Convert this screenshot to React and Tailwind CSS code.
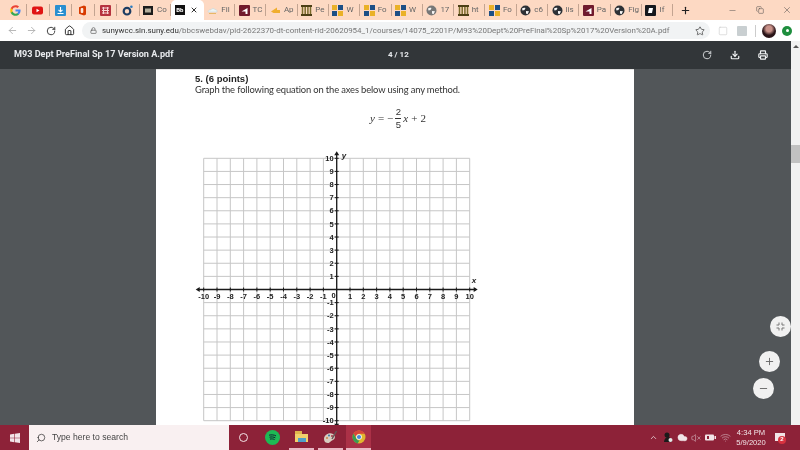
import React from "react";
import { ArrowLeft, ArrowRight, RotateCw, Home, Lock, Star, Download, Printer, Plus, Minus, Search, ChevronUp, Cloud, Wifi, VolumeX, X, Square, Copy } from "lucide-react";

const Tile = ({ bg, children }) => (
  <svg width="11" height="11" viewBox="0 0 11 11">
    <rect width="11" height="11" rx="1" fill={bg} />
    {children}
  </svg>
);
const G = () => (
  <svg width="11" height="11" viewBox="0 0 24 24">
    <path d="M23 12.2c0-.8-.1-1.500-.2-2.200H12v4.300h6.200c-.3 1.400-1.100 2.600-2.300 3.400v2.800h3.700c2.100-2 3.400-4.900 3.400-8.300z" fill="#4285f4" />
    <path d="M12 23.500c3.100 0 5.700-1 7.600-2.800l-3.700-2.800c-1 .7-2.300 1.100-3.900 1.100-3 0-5.500-2-6.400-4.700H1.800v2.900c1.900 3.800 5.800 6.300 10.200 6.300z" fill="#34a853" />
    <path d="M5.600 14.300c-.5-1.500-.5-3.100 0-4.600V6.800H1.800c-1.600 3.200-1.600 7 0 10.400z" fill="#fbbc05" />
    <path d="M12 5c1.700 0 3.200.6 4.400 1.700l3.300-3.300C17.700 1.600 15.100.5 12 .5 7.600.5 3.700 3 1.800 6.800l3.800 2.900C6.500 7 9 5 12 5z" fill="#ea4335" />
  </svg>
);
const Yt = () => (
  <svg width="11" height="11" viewBox="0 0 11 11"><rect y="1.500" width="11" height="8" rx="2" fill="#e01414" /><path d="M4.500 3.700v3.600l3-1.800z" fill="#fff" /></svg>
);
const Dl = () => (
  <Tile bg="#2a8fd0"><path d="M5.500 2v4.500M3.500 4.800l2 2 2-2M2.500 8.500h6" stroke="#fff" strokeWidth="1.100" fill="none" /></Tile>
);
const Office = () => (
  <svg width="11" height="11" viewBox="0 0 11 11"><path d="M2 2.300 7 .5l2 1v8l-2 1-5-1.800z" fill="#d83b01" /><rect x="3.700" y="3" width="2.600" height="5" rx="1" fill="#fde7d9" /></svg>
);
const Red = () => (
  <Tile bg="#b5323f"><path d="M2 3h7M2 5.500h7M2 8h7M3.500 2v7M7.500 2v7" stroke="#f6d3d3" strokeWidth="1" /></Tile>
);
const Ring = () => (
  <svg width="11" height="11" viewBox="0 0 11 11"><circle cx="5" cy="6.200" r="3.300" fill="none" stroke="#1d3d63" strokeWidth="2.200" /><circle cx="9.400" cy="1.800" r="1.300" fill="#2a7bc0" /></svg>
);
const Bb = () => (
  <svg width="11" height="11" viewBox="0 0 11 11"><rect y="1" width="10" height="9" fill="#1c1c1c" /><rect x="2" y="3.500" width="6" height="4" fill="#e8e0c8" opacity="0.75" /></svg>
);
const BbActive = () => (
  <span className="flex h-[10px] w-[10px] items-center justify-center bg-[#111] text-[6px] font-bold leading-none text-white">Bb</span>
);
const CloudFav = () => (
  <svg width="11" height="11" viewBox="0 0 11 11"><path d="M1 7c0-1.500 1.500-2.500 3-2.200C4.700 3.300 7 3 8 4.500c1.500 0 2.500 1 2 2.500z" fill="#eef3f4" stroke="#b9d3d8" strokeWidth="0.500" /><path d="M2 8.500h7" stroke="#e7b766" /></svg>
);
const Maroon = () => (
  <Tile bg="#701a2d"><path d="M2.500 6.500 8.500 3v6H6.500V6.500z" fill="#fff" /></Tile>
);
const Arrow = () => (
  <svg width="11" height="11" viewBox="0 0 11 11"><path d="M1 6.500 7 2.500v2.500h3v3H3.500z" fill="#f0ae2e" /></svg>
);
const Bars = () => (
  <svg width="11" height="11" viewBox="0 0 11 11"><rect width="11" height="2" fill="#4c3f16" /><rect y="9" width="11" height="2" fill="#4c3f16" /><path d="M1.500 2v7M4.200 2v7M6.900 2v7M9.500 2v7" stroke="#7a6b2b" strokeWidth="1.500" /></svg>
);
const Squares = () => (
  <svg width="11" height="11" viewBox="0 0 11 11"><rect width="5" height="5" fill="#eab127" /><rect x="6" width="5" height="5" fill="#1d4f86" /><rect y="6" width="5" height="5" fill="#1d4f86" /><rect x="6" y="6" width="5" height="5" fill="#eab127" /></svg>
);
const Globe = ({ c = "#2d3136" }) => (
  <svg width="11" height="11" viewBox="0 0 11 11"><circle cx="5.500" cy="5.500" r="5" fill={c} /><path d="M2 3.500c1-.8 2.500-1 3.500-.5l-1 2-2 .5zM6 6l3 .3-1.500 3L6 8.500z" fill="#f7f7f7" /></svg>
);
const GlobeGray = () => <Globe c="#777" />;
const Book = () => (
  <Tile bg="#16181c"><path d="M4 3h4l-1 5H3z" fill="#fff" /></Tile>
);

const pinned = [G, Yt, Dl, Office, Red, Ring];
const tabs = [
  [Bb, "Co"], null,
  [CloudFav, "Fil"], [Maroon, "TC"], [Arrow, "Ap"], [Bars, "Pe"], [Squares, "W"], [Squares, "Fo"], [Squares, "W"],
  [GlobeGray, "17"], [Bars, "ht"], [Squares, "Fo"], [Globe, "c6"], [Globe, "lis"], [Maroon, "Pa"], [Globe, "Fig"], [Book, "If"],
];

const Tabs = () => (
  <div className="flex h-[20px] shrink-0 items-center bg-[#fdd9c3] pl-[4.500px] font-['Roboto',sans-serif] text-[8px] text-[#666]">
    {pinned.map((Icon, i) => (
      <div key={i} className="flex h-[12px] w-[22.500px] shrink-0 items-center border-r border-[#c3a491] pl-[5px]">
        <Icon />
      </div>
    ))}
    {tabs.map((t, i) => {
      if (!t) {
        return (
          <div key={i} className="flex h-full w-[33px] shrink-0 items-center rounded-t-[5px] bg-white pl-[4px]">
            <BbActive />
            <X size={8} strokeWidth={3} className="ml-[5px] text-[#333]" />
          </div>
        );
      }
      const [Icon, label] = t;
      return (
        <div key={i} className="flex h-[12px] w-[31.300px] shrink-0 items-center gap-[3px] overflow-hidden border-r border-[#c3a491] pl-[3.500px]">
          <span className="flex h-[11px] w-[11px] shrink-0"><Icon /></span>
          <span className="whitespace-nowrap">{label}</span>
        </div>
      );
    })}
    <Plus size={11} strokeWidth={2.500} className="ml-[7px] text-[#222]" />
    <div className="ml-auto flex items-center text-[#444]">
      <span className="flex w-[27px] justify-center"><Minus size={9} strokeWidth={1.200} /></span>
      <span className="flex w-[27px] justify-center"><Copy size={8} strokeWidth={1.500} /></span>
      <span className="flex w-[27px] justify-center"><X size={10} strokeWidth={1.200} /></span>
    </div>
  </div>
);

const Toolbar = () => (
  <div className="flex h-[21px] shrink-0 items-center overflow-hidden bg-white font-['Roboto',sans-serif]">
    <ArrowLeft size={11} className="ml-[7px] shrink-0 text-[#aaa]" strokeWidth={1.800} />
    <ArrowRight size={11} className="ml-[8px] shrink-0 text-[#aaa]" strokeWidth={1.800} />
    <RotateCw size={10} className="ml-[9px] shrink-0 text-[#333]" strokeWidth={2.200} />
    <Home size={11} className="ml-[8px] shrink-0 text-[#222]" strokeWidth={2} />
    <div className="ml-[7px] flex h-[17px] w-[628px] shrink-0 items-center rounded-full bg-[#f1f3f4] pl-[8px] text-[7.950px] text-[#777]">
      <Lock size={7} strokeWidth={2.500} className="shrink-0 text-[#666]" />
      <span className="ml-[5px] whitespace-nowrap"><span className="text-[#333]">sunywcc.sln.suny.edu</span>/bbcswebdav/pid-2622370-dt-content-rid-20620954_1/courses/14075_2201P/M93%20Dept%20PreFinal%20Sp%2017%20Version%20A.pdf</span>
      <Star size={10} strokeWidth={1.800} className="ml-auto mr-[5px] shrink-0 text-[#444]" />
    </div>
    <Square size={10} strokeWidth={1.500} className="ml-[8px] shrink-0 text-[#ccc]" />
    <span className="ml-[9px] h-[10px] w-[10px] shrink-0 rounded-[1px] bg-[#c9cfd1]" />
    <span className="ml-[8px] h-[12px] w-px shrink-0 bg-[#ccc]" />
    <span className="ml-[6px] h-[14px] w-[14px] shrink-0 rounded-full bg-[radial-gradient(circle_at_50%_35%,#c9928a_25%,#2a1418_55%)]" />
    <span className="ml-[6px] flex h-[10px] w-[10px] shrink-0 items-center justify-center rounded-full bg-[#1e8e3e]"><span className="h-[3px] w-[3px] rounded-full bg-white" /></span>
  </div>
);

const Header = () => (
  <div className="relative flex h-[28px] shrink-0 items-center bg-[#323639] pl-[14px] font-['Roboto',sans-serif] text-[9.100px] font-medium text-[#e8eaed]">
    <span className="whitespace-nowrap font-bold">M93 Dept PreFinal Sp 17 Version A.pdf</span>
    <span className="absolute left-[388px] text-[8px] font-bold">4 / 12</span>
    <div className="ml-auto mr-[23px] flex items-center gap-[18px]">
      <RotateCw size={10} strokeWidth={2} className="text-[#e8eaed]" />
      <Download size={10} strokeWidth={2.800} className="text-[#f1f3f4]" />
      <Printer size={10} strokeWidth={2.800} className="text-[#f1f3f4]" />
    </div>
  </div>
);

const Chart = () => {
  const cx = 141.7, cy = 141.5, sx = 13.3, sy = 13.12;
  const range = Array.from({ length: 21 }, (_, i) => i - 10);
  const font = "'Liberation Sans',sans-serif";
  return (
    <svg width="290" height="288" viewBox="0 0 290 288" className="block">
      {range.map((n) => (
        <g key={n}>
          <line x1={cx + n * sx} x2={cx + n * sx} y1={cy - 10 * sy} y2={cy + 10 * sy} stroke="#c6c6c6" strokeWidth="1" />
          <line y1={cy + n * sy} y2={cy + n * sy} x1={cx - 10 * sx} x2={cx + 10 * sx} stroke="#c6c6c6" strokeWidth="1" />
        </g>
      ))}
      <line x1={cx} x2={cx} y1={cy - 10 * sy - 4} y2={cy + 10 * sy + 4} stroke="#1a1a1a" strokeWidth="1.300" />
      <line x1={cx - 10 * sx - 6} x2={cx + 10 * sx + 6} y1={cy} y2={cy} stroke="#1a1a1a" strokeWidth="1.300" />
      <path d={`M${cx} ${cy - 10 * sy - 7}l-2.500 4h5z`} fill="#1a1a1a" />
      <path d={`M${cx} ${cy + 10 * sy + 7}l-2.500 -4h5z`} fill="#1a1a1a" />
      <path d={`M${cx + 10 * sx + 8} ${cy}l-4 -2.500v5z`} fill="#1a1a1a" />
      <path d={`M${cx - 10 * sx - 8} ${cy}l4 -2.500v5z`} fill="#1a1a1a" />
      {range.filter((n) => n !== 0).map((n) => (
        <g key={n} fill="#222" fontFamily={font} fontSize="7.500" fontWeight="700">
          <line x1={cx + n * sx} x2={cx + n * sx} y1={cy - 2} y2={cy + 2} stroke="#1a1a1a" strokeWidth="1" />
          <line y1={cy + n * sy} y2={cy + n * sy} x1={cx - 2} x2={cx + 2} stroke="#1a1a1a" strokeWidth="1" />
          <text x={cx + n * sx} y={cy + 9} textAnchor="middle">{n}</text>
          <text x={cx - 3} y={cy - n * sy + 2.700} textAnchor="end">{n}</text>
        </g>
      ))}
      <text x={cx - 3} y={cy + 8.500} textAnchor="middle" fill="#222" fontFamily={font} fontSize="7.500" fontWeight="700">0</text>
      <text x={cx + 5} y={cy - 10 * sy} fill="#222" fontFamily={font} fontSize="8" fontStyle="italic" fontWeight="700">y</text>
      <text x={cx + 135} y={cy - 6.500} fill="#222" fontFamily={font} fontSize="8" fontStyle="italic" fontWeight="700">x</text>
    </svg>
  );
};

const Page = () => (
  <div className="ml-[156px] flex h-[356px] w-[478px] shrink-0 flex-col overflow-hidden border-t border-[#e4e4e4] bg-white pl-[39px] text-[#222]">
    <div className="mt-[3px] shrink-0 font-['Liberation_Sans',sans-serif] text-[9.500px] font-bold leading-[12px] text-[#222]">5. (6 points)</div>
    <div className="mt-[-1px] shrink-0 whitespace-nowrap font-['Lato',sans-serif] text-[9.400px] leading-[12px] tracking-[-0.015em] text-[#333]">Graph the following equation on the axes below using any method.</div>
    <div className="ml-[175px] mt-[8px] flex h-[28px] shrink-0 items-center whitespace-nowrap font-['Liberation_Serif',serif] text-[11px] text-[#333]">
      <span className="italic">y</span>
      <span className="mx-[3px]">=</span>
      <span>−</span>
      <span className="flex flex-col items-center px-[2px] text-[9.500px] leading-[12px]">
        <span className="font-['Liberation_Sans',sans-serif]">2</span>
        <span className="h-px w-[6px] bg-[#333]" />
        <span className="font-['Liberation_Sans',sans-serif]">5</span>
      </span>
      <span className="italic">x</span>
      <span className="mx-[3px]">+</span>
      <span>2</span>
    </div>
    <div className="mt-[16px] shrink-0"><Chart /></div>
  </div>
);

const FloatBtn = ({ className, children }) => (
  <div className={`absolute z-10 flex h-[21px] w-[21px] items-center justify-center rounded-full bg-[#f1f1f1] ${className}`}>{children}</div>
);

const Viewer = () => (
  <div className="relative flex min-w-0 flex-1 flex-col">
    <Header />
    <div className="flex-1 bg-[#525659]"><Page /></div>
    <FloatBtn className="left-[769.500px] top-[274.500px]">
      <svg width="9" height="9" viewBox="0 0 9 9" fill="none" stroke="#777" strokeWidth="1"><path d="M3 0.500V3H0.500M6 0.500V3H8.500M3 8.500V6H0.500M6 8.500V6H8.500" /></svg>
    </FloatBtn>
    <FloatBtn className="left-[758.500px] top-[309.500px]"><Plus size={11} strokeWidth={2} className="text-[#666]" /></FloatBtn>
    <FloatBtn className="left-[752.500px] top-[336.500px]"><Minus size={11} strokeWidth={2} className="text-[#666]" /></FloatBtn>
  </div>
);

const Scrollbar = () => (
  <div className="flex w-[9px] shrink-0 flex-col items-center bg-[#f1f1f1]">
    <div className="mt-[4px] h-0 w-0 border-x-[3px] border-b-[3px] border-x-transparent border-b-[#555]" />
    <div className="mt-[97px] h-[18px] w-full bg-[#c1c1c1]" />
  </div>
);

const TaskCell = ({ w, active, on, children }) => (
  <div className={`flex h-full ${w} shrink-0 justify-center`}>
    <div className={`flex h-full w-[25px] items-center justify-center ${on ? "border-b-2 border-[#e9b7c3]" : ""} ${active ? "bg-[#ab3147]" : ""}`}>{children}</div>
  </div>
);

const Taskbar = () => (
  <div className="flex h-[25px] shrink-0 items-center bg-[#8d2238] font-['Liberation_Sans',sans-serif]">
    <div className="flex w-[29px] justify-center">
      <svg width="10" height="10" viewBox="0 0 10 10" fill="#f2e4e7"><path d="M0 1.400 4.300.8v3.900H0zM4.900.7 10 0v4.700H4.900zM0 5.300h4.300v3.900L0 8.600zM4.900 5.300H10V10l-5.100-.7z" /></svg>
    </div>
    <div className="flex h-full w-[200px] items-center bg-[#f9f0f1] pl-[7px] text-[8.600px] text-[#444]">
      <Search size={10} strokeWidth={1.600} className="-scale-x-100 text-[#222]" />
      <span className="ml-[6px] whitespace-nowrap">Type here to search</span>
    </div>
    <TaskCell w="w-[29px]"><div className="h-[9px] w-[9px] rounded-full border-[1.500px] border-[#f4e4e7]" /></TaskCell>
    <TaskCell w="w-[29px]">
      <div className="flex h-[15px] w-[15px] items-center justify-center rounded-full bg-[#1db954]">
        <svg width="9" height="7" viewBox="0 0 9 7" fill="none" stroke="#123" strokeWidth="1"><path d="M1 1.200c2.500-.6 5-.4 7 .7M1.500 3.200c2-.5 4.200-.3 5.800.6M2 5.100c1.700-.4 3.300-.2 4.600.5" /></svg>
      </div>
    </TaskCell>
    <TaskCell w="w-[29px]" on>
      <div className="flex w-[13px] flex-col">
        <div className="h-[3px] w-[7px] bg-[#e0b44c]" />
        <div className="flex h-[8px] w-[13px] items-end justify-center bg-[#f0cf6c]"><div className="h-[4px] w-[8px] bg-[#4f9fc8]" /></div>
      </div>
    </TaskCell>
    <TaskCell w="w-[29px]" on>
      <svg width="15" height="14" viewBox="0 0 15 14"><path d="M1 9c0-4 5-7 9-5 3 2 2 5 0 6-3 1-3 3-5 3-2 0-4-1-4-4z" fill="#d8ccc0" /><circle cx="4" cy="8" r="1" fill="#c84" /><circle cx="6" cy="5.500" r="1" fill="#37a" /><circle cx="9" cy="6" r="1" fill="#a34" /><path d="M9 9 13.500 1" stroke="#655" strokeWidth="1.500" /></svg>
    </TaskCell>
    <TaskCell w="w-[27px]" on active>
      <svg width="14" height="14" viewBox="0 0 14 14"><circle cx="7" cy="7" r="6.500" fill="#e1b62f" /><path d="M7 .5a6.500 6.500 0 0 1 5.600 3.300H7z" fill="#d9453a" /><path d="M1.500 3.500 4.600 9a3 3 0 0 0 2.900 1.500L5.500 13.400A6.500 6.500 0 0 1 1.500 3.500z" fill="#3a9b52" /><path d="M1.500 3.500A6.500 6.500 0 0 1 7 .5v3.300A3.500 3.500 0 0 0 4 7z" fill="#d9453a" /><circle cx="7" cy="7" r="2.800" fill="#fff" /><circle cx="7" cy="7" r="2.100" fill="#4a86d8" /></svg>
    </TaskCell>
    <div className="ml-auto flex h-full items-center text-[#f1e4e7]">
      <ChevronUp size={9} strokeWidth={2} />
      <svg width="10" height="11" viewBox="0 0 10 11" className="ml-[5px]"><circle cx="4" cy="3" r="2.500" fill="#1a1a1a" /><path d="M1 10c0-3 2-5 4-5s4 2 4 5z" fill="#1a1a1a" /><circle cx="7.500" cy="8" r="2" fill="#e8e8e8" /></svg>
      <Cloud size={11} fill="currentColor" strokeWidth={1} className="ml-[4px]" />
      <VolumeX size={10} strokeWidth={1.500} className="ml-[3px] text-[#d9b9c0]" />
      <svg width="11" height="9" viewBox="0 0 11 9" fill="#f1e4e7" className="ml-[4px]"><rect y="1.500" width="9" height="6" rx="1" /><rect x="9.500" y="3" width="1.500" height="3" /><rect x="2" y="3" width="2" height="3" fill="#8d2238" /></svg>
      <Wifi size={11} strokeWidth={1.500} className="ml-[4px] text-[#cfa9b2]" />
      <div className="ml-[1px] flex w-[38px] flex-col items-center text-[7.600px] leading-[10px]">
        <span>4:34 PM</span>
        <span>5/9/2020</span>
      </div>
      <div className="relative ml-[5px] mr-[14px] h-[10px] w-[11px]">
        <div className="h-[8px] w-[10px] bg-[#f1e4e7]" />
        <div className="absolute left-[3px] top-[3px] flex h-[8px] w-[8px] items-center justify-center rounded-full bg-[#d8323f] text-[6px] font-bold text-white">2</div>
      </div>
    </div>
  </div>
);

export default function App() {
  return (
    <div className="flex h-[450px] w-[800px] flex-col overflow-hidden bg-white blur-[0.4px]">
      <Tabs />
      <Toolbar />
      <div className="flex min-h-0 flex-1">
        <Viewer />
        <Scrollbar />
      </div>
      <Taskbar />
    </div>
  );
}
